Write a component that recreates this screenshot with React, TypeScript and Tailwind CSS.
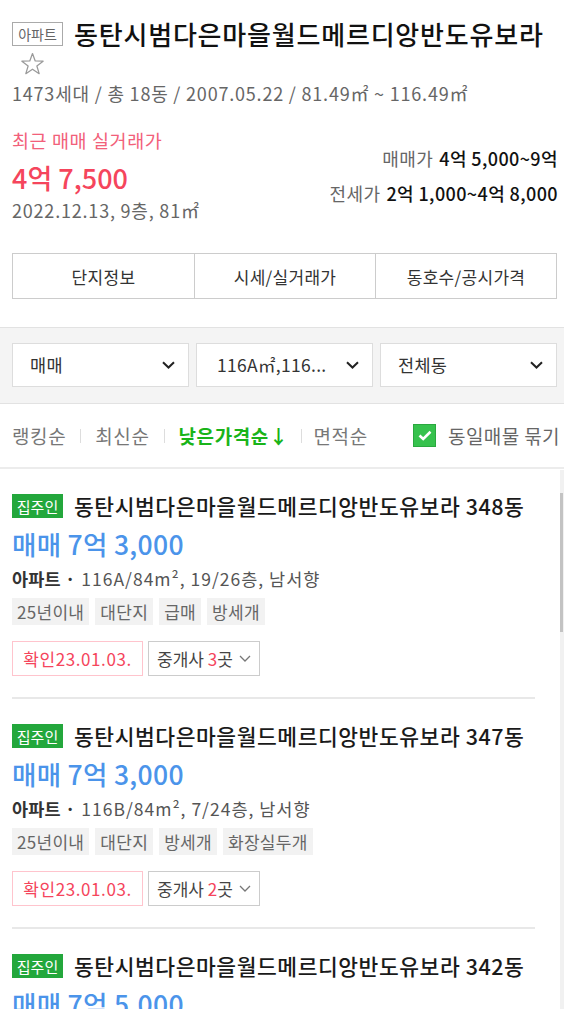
import React from "react";

const Chevron = ({ className = "" }: { className?: string }) => (
  <svg width="13" height="8" viewBox="0 0 13 8" className={className} fill="none">
    <path d="M1 1.2 L6.5 6.5 L12 1.2" stroke="currentColor" strokeWidth="2" />
  </svg>
);

const SmallChevron = () => (
  <svg width="12" height="7" viewBox="0 0 12 7" fill="none">
    <path d="M1 1 L6 6 L11 1" stroke="#777" strokeWidth="1.3" />
  </svg>
);

type Item = {
  dong: string;
  price: string;
  spec: string;
  tags: string[];
  brokers: string;
};

const items: Item[] = [
  { dong: "348동", price: "매매 7억 3,000", spec: "116A/84m², 19/26층, 남서향", tags: ["25년이내", "대단지", "급매", "방세개"], brokers: "3" },
  { dong: "347동", price: "매매 7억 3,000", spec: "116B/84m², 7/24층, 남서향", tags: ["25년이내", "대단지", "방세개", "화장실두개"], brokers: "2" },
  { dong: "342동", price: "매매 7억 5,000", spec: "116A/84m², 12/25층, 남서향", tags: ["25년이내", "대단지"], brokers: "2" },
];

function Listing({ it }: { it: Item }) {
  return (
    <div className="pt-[25px]">
      <div className="flex items-center h-[24px]">
        <span className="h-[24px] w-[51px] flex items-center justify-center bg-[#23a73c] text-white text-[15px] leading-none">집주인</span>
        <span className="ml-[11px] text-[21.5px] tracking-[0.55px] leading-none text-[#1a1a1a] font-medium whitespace-nowrap">
          동탄시범다은마을월드메르디앙반도유보라 {it.dong}
        </span>
      </div>
      <div className="mt-[10px] h-[32px] flex items-center text-[26.5px] tracking-[0.3px] leading-none text-[#4b94ea] font-medium">{it.price}</div>
      <div className="mt-[7px] h-[24px] flex items-center text-[17.5px] tracking-[1px] leading-none text-[#555] whitespace-nowrap">
        <span className="font-bold text-[#333] tracking-[0.2px]">아파트</span>
        <span className="font-bold text-[#333] ml-[4px] mr-[5px]">·</span>
        <span>{it.spec}</span>
      </div>
      <div className="mt-[7px] flex gap-[6px]">
        {it.tags.map((t) => (
          <span key={t} className="h-[27px] px-[5px] flex items-center bg-[#f2f2f2] text-[17px] tracking-[0.3px] leading-none text-[#666]">{t}</span>
        ))}
      </div>
      <div className="mt-[16px] flex gap-[5px]">
        <span className="h-[35px] w-[131px] flex items-center justify-center border border-[#ffc4cd] text-[#f5455c] text-[17px] tracking-[0.6px] leading-none">확인23.01.03.</span>
        <span className="h-[35px] w-[112px] flex items-center justify-center gap-[6px] border border-[#ccc] text-[#444] text-[17px] leading-none">
          <span>중개사 <span className="text-[#f5455c]">{it.brokers}</span>곳</span>
          <SmallChevron />
        </span>
      </div>
      <div className="mt-[21px] h-[2px] bg-[#e8e8e8]" />
    </div>
  );
}

export default function App() {
  return (
    <div className="relative w-[564px] h-[1009px] overflow-hidden bg-white font-['Noto_Sans_CJK_KR','Noto_Sans',sans-serif]">
      {/* Header */}
      <div className="pl-3 pr-[6px] pt-[20px]">
        <div className="flex items-center h-[28px]">
          <span className="h-[24px] w-[51px] flex items-center justify-center border border-[#aaa] text-[14px] leading-none text-[#666]">아파트</span>
          <h1 className="ml-[11px] text-[26px] leading-none font-medium text-[#111] whitespace-nowrap tracking-[0.8px]">동탄시범다은마을월드메르디앙반도유보라</h1>
        </div>
        <div className="h-[32px] flex items-center pl-[8px]">
          <svg width="25" height="24" viewBox="0 0 24 23" fill="none">
            <path d="M12 1.5 L14.6 8.6 L22.2 8.8 L16.2 13.4 L18.4 20.8 L12 16.5 L5.6 20.8 L7.8 13.4 L1.8 8.8 L9.4 8.6 Z" stroke="#9a9a9a" strokeWidth="1.2" strokeLinejoin="round" />
          </svg>
        </div>
        <div className="h-[26px] flex items-center text-[18px] tracking-[0.8px] leading-none text-[#666] whitespace-nowrap">
          1473세대 / 총 18동 / 2007.05.22 / 81.49㎡ ~ 116.49㎡
        </div>

        <div className="mt-[22px] flex justify-between">
          <div>
            <div className="h-[24px] flex items-center text-[18.5px] tracking-[0.6px] leading-none text-[#f2607a]">최근 매매 실거래가</div>
            <div className="mt-[5px] h-[40px] flex items-center text-[27px] leading-none font-medium text-[#f5455c]">4억 7,500</div>
            <div className="h-[26px] flex items-center text-[18px] tracking-[0.8px] leading-none text-[#666] whitespace-nowrap">2022.12.13, 9층, 81㎡</div>
          </div>
          <div className="flex flex-col items-end">
            <div className="mt-[18px] h-[24px] flex items-center text-[18px] tracking-[0.4px] leading-none whitespace-nowrap">
              <span className="text-[#666]">매매가</span>
              <span className="ml-[6px] text-[#111] font-medium">4억 5,000~9억</span>
            </div>
            <div className="mt-[11px] h-[24px] flex items-center text-[18px] tracking-[0.4px] leading-none whitespace-nowrap">
              <span className="text-[#666]">전세가</span>
              <span className="ml-[6px] text-[#111] font-medium">2억 1,000~4억 8,000</span>
            </div>
          </div>
        </div>

        <div className="mt-[30px] mr-px h-[46px] grid grid-cols-3 border border-[#ccc] text-[17px] tracking-[0.3px] leading-none text-[#333]">
          <div className="flex items-center justify-center">단지정보</div>
          <div className="flex items-center justify-center border-l border-[#ccc]">시세/실거래가</div>
          <div className="flex items-center justify-center border-l border-[#ccc]">동호수/공시가격</div>
        </div>
      </div>

      {/* Filters */}
      <div className="mt-[28px] bg-[#f4f4f4] border-y border-[#e2e2e2] pl-3 pr-[7px] pt-[15px] pb-[16px] grid grid-cols-3 gap-[7px]">
        {["매매", "116A㎡,116...", "전체동"].map((t, i) => (
          <div key={t} className={`h-[44px] bg-white border border-[#ddd] flex items-center justify-between pr-[13px] ${i === 1 ? "pl-[20px]" : "pl-[17px]"}`}>
            <span className="text-[17.5px] tracking-[0.3px] leading-none text-[#333] whitespace-nowrap">{t}</span>
            <Chevron className="text-[#222]" />
          </div>
        ))}
      </div>

      {/* Sort row */}
      <div className="h-[65px] flex items-center justify-between pl-3 pr-[4px] border-b-2 border-[#ececec]">
        <div className="flex items-center text-[19px] tracking-[0.6px] leading-none text-[#777]">
          <span>랭킹순</span>
          <span className="mx-[14px] w-px h-[14px] bg-[#ddd]" />
          <span>최신순</span>
          <span className="mx-[14px] w-px h-[14px] bg-[#ddd]" />
          <span className="text-[#19b419] font-bold">낮은가격순↓</span>
          <span className="ml-[12px] mr-[12px] w-px h-[14px] bg-[#ddd]" />
          <span>면적순</span>
        </div>
        <div className="flex items-center">
          <span className="w-[23px] h-[23px] bg-[#36c24d] border border-[#2aa83f] flex items-center justify-center">
            <svg width="14" height="11" viewBox="0 0 14 11" fill="none">
              <path d="M1.5 5.5 L5.2 9 L12.5 1.8" stroke="white" strokeWidth="2.6" />
            </svg>
          </span>
          <span className="ml-[12px] text-[19px] tracking-[0.4px] leading-none text-[#666]">동일매물 묶기</span>
        </div>
      </div>

      {/* Listings */}
      <div className="pl-3 pr-[29px]">
        {items.map((it) => (
          <Listing key={it.dong} it={it} />
        ))}
      </div>

      {/* Scrollbar overlay */}
      <div className="absolute right-0 top-[470px] bottom-0 w-[4px] bg-[#f1f1f1]">
        <div className="mt-[23px] h-[139px] w-[3px] bg-[#c3c3c3]" />
      </div>
    </div>
  );
}
